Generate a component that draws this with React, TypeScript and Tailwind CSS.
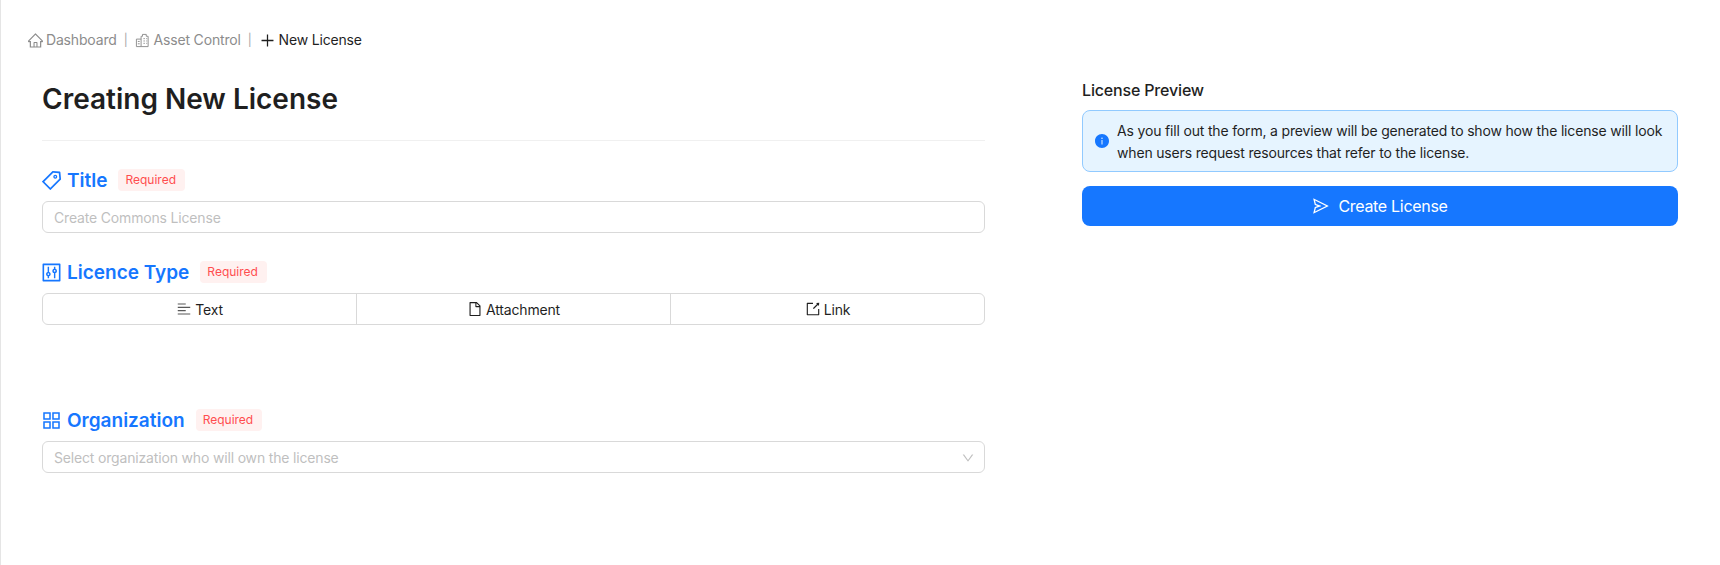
import {
  AiOutlineHome,
  AiOutlineTag,
  AiOutlineControl,
  AiOutlineAppstore,
  AiOutlineAlignLeft,
  AiOutlineFile,
  AiOutlineExport,
  AiOutlineSend,
  AiFillInfoCircle,
  AiOutlinePlus,
  AiOutlineDown,
} from "react-icons/ai";
import type { ReactNode } from "react";

function BuildingsIcon() {
  return (
    <svg viewBox="0 0 16 16" fill="none" stroke="currentColor" strokeWidth="1" className="mr-[4px] h-[15px] w-[15px]">
      <path d="M6.5 14.5V3.5h1.5V1.5h4v2h2v11z" />
      <path d="M6.5 6.5h-5v8h5" />
      <path d="M9 6h1.5M12 6h1M9 8.5h1.5M12 8.5h1M9 11h1.5M12 11h1M3 9h2M3 11.5h2" />
    </svg>
  );
}

function Required() {
  return (
    <span className="ml-[11px] flex h-[22px] items-center rounded-[4px] bg-[#fff1f0] pr-[9px] pl-[7px] text-xs tracking-normal text-[#ff4d4f]">
      Required
    </span>
  );
}

function Label({ icon, text }: { icon: ReactNode; text: string }) {
  return (
    <div className="flex h-[30px] items-center">
      <span className="-ml-[2px] mr-[4px] text-[23px] text-[#1677ff]">{icon}</span>
      <span className="pt-px text-[19px] font-semibold tracking-normal text-[#1677ff]">{text}</span>
      <Required />
    </div>
  );
}

function Tab({ icon, text }: { icon: ReactNode; text: string }) {
  return (
    <div className="flex flex-1 items-center justify-center gap-[3px] border-l border-[#d9d9d9] first:border-l-0">
      {icon}
      <span className="pt-px">{text}</span>
    </div>
  );
}

export default function App() {
  return (
    <div className="min-h-[565px] border-l border-[#e5e5e5] bg-white pt-[28px] pl-[26px] pr-[42px] font-['Inter',sans-serif] text-sm tracking-[-0.17px] text-[#1f1f1f]">
      <div className="flex h-6 items-center text-[#8c8c8c]">
        <AiOutlineHome className="mr-[2px] text-[17px]" />
        <span>Dashboard</span>
        <span className="mx-[7px] text-xs text-[#a6a6a6]">|</span>
        <BuildingsIcon />
        <span>Asset Control</span>
        <span className="mx-[7px] text-xs text-[#a6a6a6]">|</span>
        <AiOutlinePlus className="mr-[3px] text-[17px] text-[#1f1f1f]" />
        <span className="text-[#1f1f1f]">New License</span>
      </div>

      <div className="mt-[10px] flex pl-[15px]">
        <div className="w-[943px]">
          <h1 className="flex h-[79px] items-center border-b border-[#f0f0f0] pb-[4px] text-[28px] leading-none font-semibold tracking-normal">
            Creating New License
          </h1>

          <div className="mt-[24px]">
            <Label icon={<AiOutlineTag />} text="Title" />
            <div className="mt-[6px] flex h-8 items-center rounded-md border border-[#d9d9d9] px-[11px] pt-px text-[#bfbfbf]">
              Create Commons License
            </div>
          </div>

          <div className="mt-[24px]">
            <Label icon={<AiOutlineControl />} text="Licence Type" />
            <div className="mt-[6px] flex h-8 rounded-md border border-[#d9d9d9]">
              <Tab icon={<AiOutlineAlignLeft className="text-[16px] text-[#595959]" />} text="Text" />
              <Tab icon={<AiOutlineFile className="text-[16px]" />} text="Attachment" />
              <Tab icon={<AiOutlineExport className="text-[16px]" />} text="Link" />
            </div>
          </div>

          <div className="mt-[80px]">
            <Label icon={<AiOutlineAppstore />} text="Organization" />
            <div className="mt-[6px] flex h-8 items-center justify-between rounded-md border border-[#d9d9d9] pt-px pr-[9px] pl-[11px] text-[#bfbfbf]">
              <span>Select organization who will own the license</span>
              <AiOutlineDown className="text-[14px]" />
            </div>
          </div>
        </div>

        <div className="ml-[97px] flex-1 pt-[16px]">
          <h2 className="text-base leading-6 font-medium">License Preview</h2>
          <div className="mt-[8px] flex h-[62px] items-center rounded-lg border border-[#91caff] bg-[#e6f4ff] pr-3 pl-[11px]">
            <AiFillInfoCircle className="mr-[7px] shrink-0 text-[16px] text-[#1677ff]" />
            <p className="pt-px leading-[22px]">
              As you fill out the form, a preview will be generated to show how the license will look when users request resources that refer to the license.
            </p>
          </div>
          <button className="mt-[14px] flex h-10 w-full items-center justify-center gap-2 rounded-lg bg-[#1677ff] text-base tracking-[-0.3px] text-white">
            <AiOutlineSend className="text-[18px]" />
            Create License
          </button>
        </div>
      </div>
    </div>
  );
}
